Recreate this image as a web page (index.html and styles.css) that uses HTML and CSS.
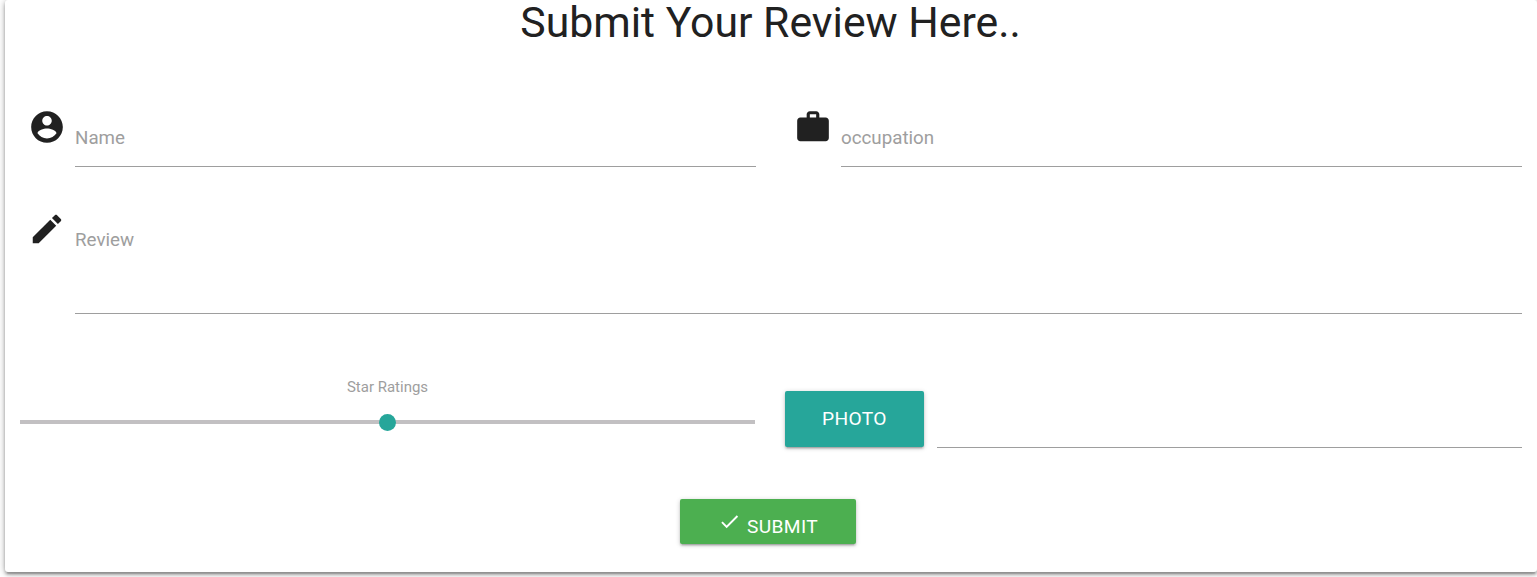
FILE: index.html
```html
<!DOCTYPE html>
<html lang="en">
<head>
<meta charset="utf-8">
<title>Submit Your Review</title>
<link rel="stylesheet" href="styles.css">
</head>
<body>
<main class="card">
  <h1 class="title">Submit Your Review Here..</h1>
  <form class="form">
    <div class="row">
      <div class="field">
        <svg class="icon" viewBox="0 0 24 24"><path d="M12 2C6.48 2 2 6.48 2 12s4.480 10 10 10 10-4.480 10-10S17.520 2 12 2zm0 3c1.660 0 3 1.340 3 3s-1.340 3-3 3-3-1.340-3-3 1.340-3 3-3zm0 14.200c-2.500 0-4.710-1.280-6-3.220.030-1.990 4-3.080 6-3.080 1.990 0 5.970 1.090 6 3.080-1.290 1.940-3.500 3.220-6 3.220z"/></svg>
        <div class="input">Name</div>
      </div>
      <div class="field">
        <svg class="icon" viewBox="0 0 24 24"><path d="M20 6h-4V4c0-1.110-.890-2-2-2h-4c-1.110 0-2 .890-2 2v2H4c-1.110 0-1.990.890-1.990 2L2 19c0 1.110.890 2 2 2h16c1.110 0 2-.890 2-2V8c0-1.110-.890-2-2-2zm-6 0h-4V4h4v2z"/></svg>
        <div class="input">occupation</div>
      </div>
    </div>
    <div class="row row-review">
      <div class="field">
        <svg class="icon" viewBox="0 0 24 24"><path d="M3 17.250V21h3.750L17.810 9.940l-3.750-3.750L3 17.250zM20.710 7.040c.390-.390.390-1.020 0-1.410l-2.340-2.340c-.390-.390-1.020-.390-1.410 0l-1.830 1.830 3.750 3.750 1.830-1.830z"/></svg>
        <div class="input input-tall">Review</div>
      </div>
    </div>
    <div class="row row-extras">
      <div class="rating">
        <span class="rating-label">Star Ratings</span>
        <div class="track"><span class="thumb"></span></div>
      </div>
      <div class="file">
        <button class="btn btn-photo" type="button">PHOTO</button>
        <div class="file-path"></div>
      </div>
    </div>
    <button class="btn btn-submit" type="button">
      <svg class="check" viewBox="0 0 24 24"><path d="M9 16.170L4.830 12l-1.420 1.410L9 19 21 7l-1.410-1.410z"/></svg>
      <span>SUBMIT</span>
    </button>
  </form>
</main>
</body>
</html>
```
FILE: styles.css
```css
* { box-sizing: border-box; }
body {
  margin: 0;
  height: 577px;
  overflow: hidden;
  background: #fff;
  color: #212121;
  font-family: Roboto, sans-serif;
}
.card {
  height: 572px;
  margin-left: 5px;
  border-radius: 3px;
  background: #fff;
  box-shadow: 0 3px 3px 0 rgba(0,0,0,.2), 0 4px 1px -2px rgba(0,0,0,.12), 0 1px 7px 0 rgba(0,0,0,.34);
}
.title {
  margin: 0;
  height: 91px;
  padding-right: 1px;
  font-size: 42.75px;
  font-weight: 400;
  line-height: 45px;
  text-align: center;
}
.form {
  display: flex;
  flex-direction: column;
  padding: 0 15px;
}
.row {
  display: grid;
  grid-template-columns: 1fr 1fr;
  gap: 30px;
  height: 102px;
  align-items: start;
}
.row-review { grid-template-columns: 1fr; height: 187px; }
.field { display: flex; align-items: flex-start; padding: 16px 0 0 8px; }
.icon {
  flex: none;
  width: 38px;
  height: 38px;
  margin: 1px 9px 0 0;
  fill: #212121;
}
.input {
  flex: 1;
  height: 60px;
  padding-top: 17px;
  border-bottom: 1px solid #9e9e9e;
  color: #9e9e9e;
  font-size: 18.75px;
  line-height: 28px;
}
.input-tall { height: 105px; }
.row-extras { grid-template-columns: 735px 1fr; height: 119px; }
.rating { display: flex; flex-direction: column; align-items: center; }
.rating-label {
  color: #9e9e9e;
  font-size: 15px;
  line-height: 14px;
}
.track {
  display: flex;
  align-items: center;
  justify-content: center;
  width: 100%;
  height: 4px;
  margin-top: 26px;
  background: #c2c0c2;
}
.thumb { flex: none; width: 17px; height: 17px; border-radius: 50%; background: #26a69a; }
.file { display: flex; gap: 13px; padding-top: 11px; }
.btn {
  border: 0;
  border-radius: 2px;
  color: #fff;
  font: 400 19.2px Roboto, sans-serif;
  letter-spacing: .35px;
  box-shadow: 0 2px 2px 0 rgba(0,0,0,.14), 0 3px 1px -2px rgba(0,0,0,.12), 0 1px 5px 0 rgba(0,0,0,.2);
}
.btn-photo { width: 139px; height: 56px; padding: 0 0 1px; background: #26a69a; }
.file-path { flex: 1; height: 57px; border-bottom: 1px solid #9e9e9e; }
.btn-submit {
  display: flex;
  align-self: center;
  width: 176px;
  height: 45px;
  margin-right: 6px;
  padding: 12px 0 0 39px;
  background: #4caf50;
  line-height: 31px;
}
.check { width: 23px; height: 23px; margin: -1px 6px 0 -1px; fill: #fff; }
```
